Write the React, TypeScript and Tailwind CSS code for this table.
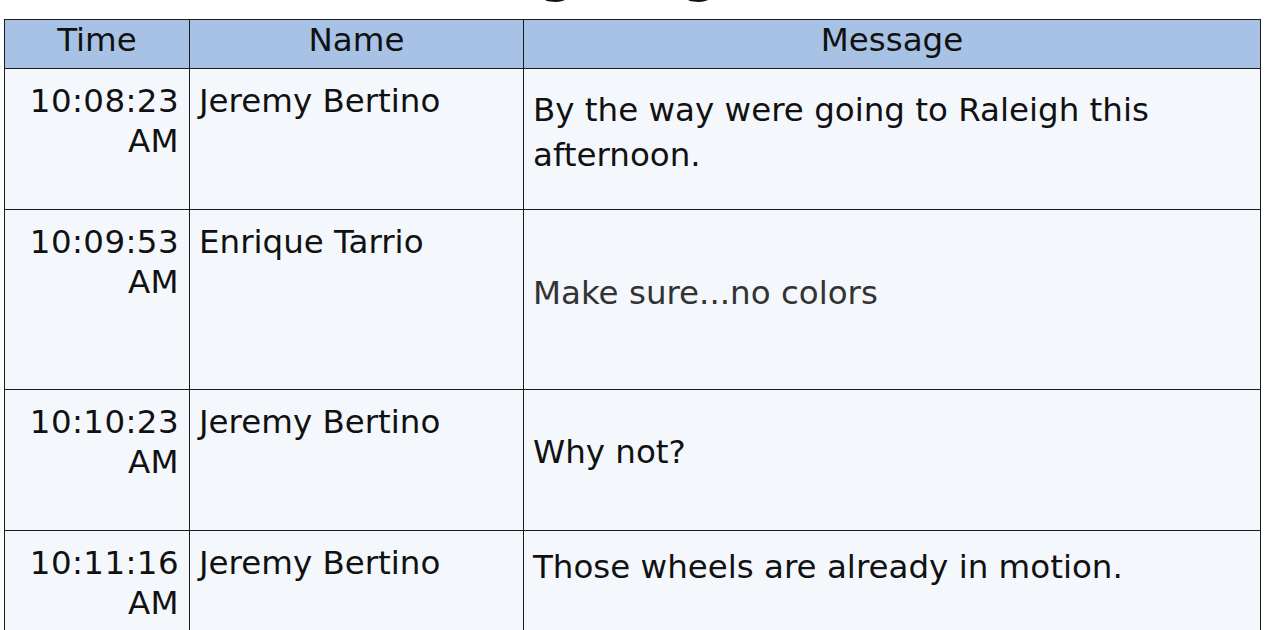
import React from "react";

const rows = [
  { time: ["10:08:23", "AM"], name: "Jeremy Bertino", msg: "By the way were going to Raleigh this afternoon.", h: "h-[141px]", pt: "pt-[19px]", gray: false },
  { time: ["10:09:53", "AM"], name: "Enrique Tarrio", msg: "Make sure...no colors", h: "h-[180px]", pt: "pt-[61px]", gray: true },
  { time: ["10:10:23", "AM"], name: "Jeremy Bertino", msg: "Why not?", h: "h-[141px]", pt: "pt-[40px]", gray: false },
  { time: ["10:11:16", "AM"], name: "Jeremy Bertino", msg: "Those wheels are already in motion.", h: "h-[141px]", pt: "pt-[14px]", gray: false },
];

export default function App() {
  return (
    <div className="w-[1274px] h-[630px] overflow-hidden bg-white text-[#111]" style={{ fontFamily: '"DejaVu Sans", Verdana, sans-serif' }}>
      <div className="h-[19px] overflow-hidden">
        <div className="flex -mt-[50px] pl-[540px] text-[50px] font-bold leading-none text-[#111]">
          <span className="w-[143px]">g</span>
          <span>g</span>
        </div>
      </div>
      <table className="border-collapse table-fixed ml-[4px] w-[1257px]">
        <colgroup>
          <col className="w-[185px]" />
          <col className="w-[334px]" />
          <col />
        </colgroup>
        <thead>
          <tr className="h-[49px] bg-[#a7c2e4]">
            <th className="border border-[#1c1c1c] font-normal text-[32.5px] leading-[40px] text-center pb-[8px]">Time</th>
            <th className="border border-[#1c1c1c] font-normal text-[32.5px] leading-[40px] text-center pb-[8px]">Name</th>
            <th className="border border-[#1c1c1c] font-normal text-[32.5px] leading-[40px] text-center pb-[8px]">Message</th>
          </tr>
        </thead>
        <tbody className="bg-[#f4f8fd]">
          {rows.map((r, i) => (
            <tr key={i} className={r.h}>
              <td className="border border-[#1c1c1c] align-top text-right pr-[10px] pt-[12px] text-[32.5px] leading-[40px] tracking-[0.4px]">
                <div>{r.time[0]}</div>
                <div>{r.time[1]}</div>
              </td>
              <td className="border border-[#1c1c1c] align-top text-left pl-[9px] pt-[12px] text-[32.5px] leading-[40px]">
                {r.name}
              </td>
              <td className={`border border-[#1c1c1c] align-top text-left pl-[9px] pr-[10px] ${r.pt} leading-[45px] text-[32.5px] ${r.gray ? "text-[#333]" : ""}`}>
                {r.msg}
              </td>
            </tr>
          ))}
        </tbody>
      </table>
    </div>
  );
}
